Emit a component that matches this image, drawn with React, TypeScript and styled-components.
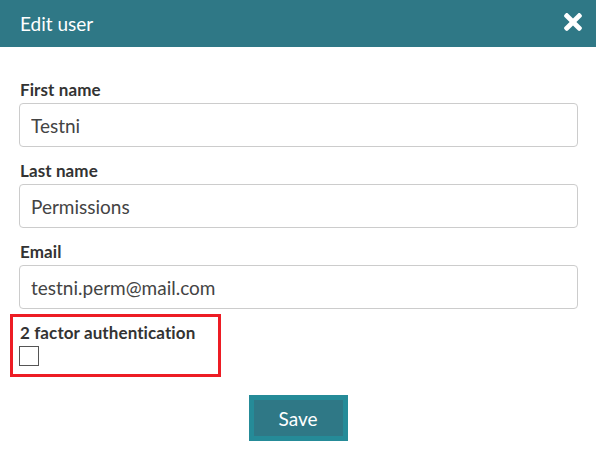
import styled, { createGlobalStyle } from 'styled-components';
import { FaTimes } from 'react-icons/fa';

const GlobalStyle = createGlobalStyle`
  body {
    margin: 0;
    background: #ffffff;
    font-family: Lato, "Open Sans", sans-serif;
  }
`;

type Field = {
  label: string;
  value: string;
};

const FIELDS: Field[] = [
  { label: 'First name', value: 'Testni' },
  { label: 'Last name', value: 'Permissions' },
  { label: 'Email', value: 'testni.perm@mail.com' },
];

export default function App() {
  return (
    <>
      <GlobalStyle />
      <Dialog>
        <Header>
          <Title>Edit user</Title>
          <CloseButton aria-label="Close">
            <FaTimes size={26} color="#ffffff" />
          </CloseButton>
        </Header>
        <Body>
          {FIELDS.map(({ label, value }) => (
            <FieldGroup key={label}>
              <Label>{label}</Label>
              <TextInput defaultValue={value} />
            </FieldGroup>
          ))}
          <Highlight>
            <Label>2 factor authentication</Label>
            <Checkbox type="checkbox" />
          </Highlight>
          <Footer>
            <SaveButton>Save</SaveButton>
          </Footer>
        </Body>
      </Dialog>
    </>
  );
}

const Dialog = styled.div`
  width: 596px;
  height: 452px;
  background: #ffffff;
`;

const Header = styled.div`
  height: 47px;
  background: #2f7886;
  display: flex;
  align-items: center;
  justify-content: space-between;
  padding: 0 10px 0 20px;
  box-sizing: border-box;
`;

const Title = styled.h1`
  margin: 0;
  color: #ffffff;
  font-size: 19px;
  font-weight: 400;
  padding-bottom: 1px;
`;

const CloseButton = styled.button`
  background: none;
  border: none;
  padding: 0;
  display: flex;
  cursor: pointer;
  margin-top: -3px;
`;

const Body = styled.div`
  padding: 33px 18px 0 19px;
  display: flex;
  flex-direction: column;
`;

const FieldGroup = styled.div`
  display: flex;
  flex-direction: column;
  gap: 3px;
  margin-bottom: 14px;

  &:nth-child(3) {
    margin-bottom: 5px;
  }
`;

const Label = styled.label`
  color: #333333;
  font-size: 17px;
  font-weight: 700;
  letter-spacing: 0.1px;
  line-height: 20px;
  padding-left: 1px;
`;

const TextInput = styled.input`
  height: 44px;
  box-sizing: border-box;
  border: 1px solid #cccccc;
  border-radius: 4px;
  padding: 0 11px;
  font-family: Lato, "Open Sans", sans-serif;
  font-size: 19px;
  color: #444444;
  outline: none;
`;

const Highlight = styled.div`
  width: 211px;
  height: 63px;
  box-sizing: border-box;
  margin-left: -9px;
  border: 3px solid #ed1c24;
  padding: 6px 7px 0 7px;
  display: flex;
  flex-direction: column;
  align-items: flex-start;
  gap: 3px;

  ${Label} {
    padding-left: 0;
  }
`;

const Checkbox = styled.input`
  appearance: none;
  width: 20px;
  height: 20px;
  margin: 0 0 0 -1px;
  border: 1px solid #555555;
  background: #ffffff;
  box-sizing: border-box;
`;

const Footer = styled.div`
  display: flex;
  justify-content: center;
  padding-top: 18px;
  padding-right: 1px;
`;

const SaveButton = styled.button`
  width: 99px;
  height: 46px;
  box-sizing: border-box;
  border: 5px solid #258b98;
  background: #2f7886;
  color: #ffffff;
  font-family: Lato, "Open Sans", sans-serif;
  font-size: 19px;
  cursor: pointer;
`;
